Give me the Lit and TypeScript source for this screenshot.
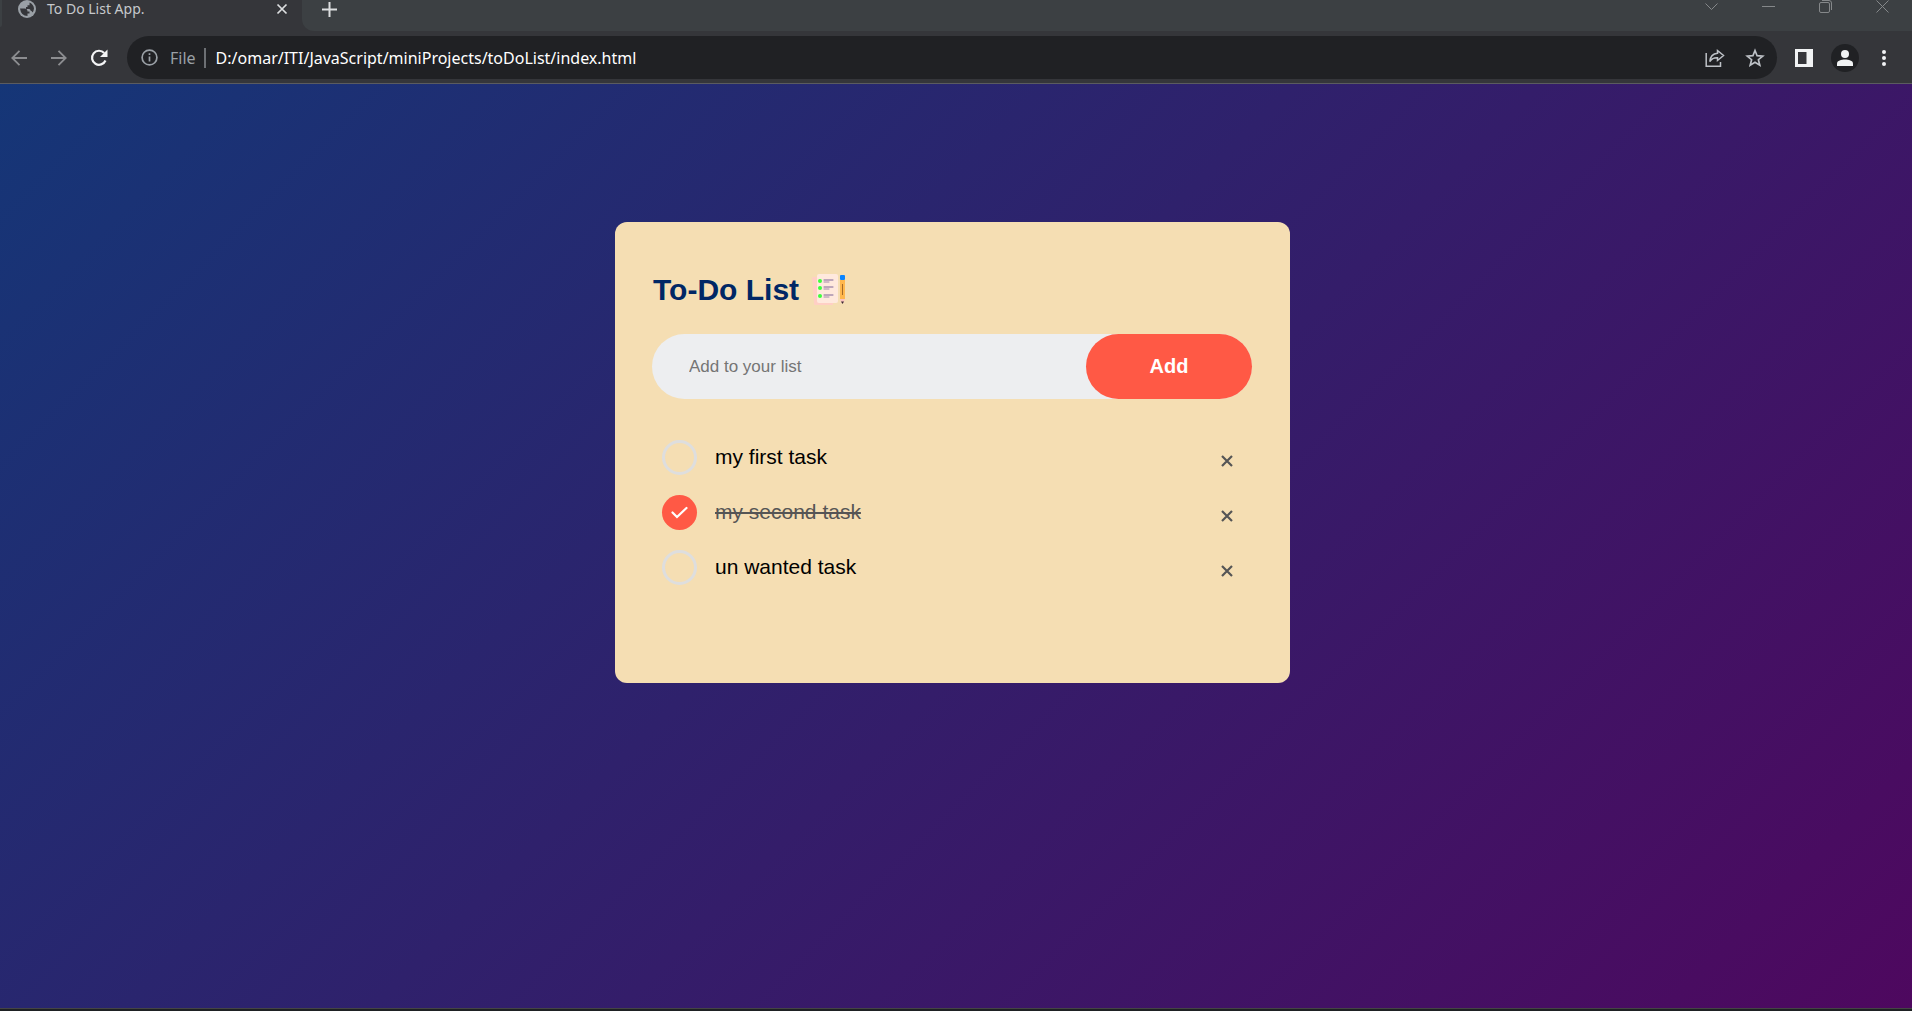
import { LitElement, html, css, svg } from "lit";
import { customElement, state } from "lit/decorators.js";
import { classMap } from "lit/directives/class-map.js";

interface Task {
  id: number;
  text: string;
  done: boolean;
}

@customElement("browser-chrome")
export class BrowserChrome extends LitElement {
  static styles = css`
    :host {
      display: block;
      font-family: "Noto Sans", "Open Sans", sans-serif;
      background: #35363a;
      border-bottom: 1px solid #5b5c60;
    }
    button {
      display: flex;
      align-items: center;
      justify-content: center;
      padding: 0;
      border: 0;
      background: none;
      color: inherit;
    }
    svg {
      display: block;
      overflow: visible;
    }
    .strip {
      display: flex;
      height: 31px;
    }
    .edge {
      width: 2px;
      height: 27px;
      background: #3c4043;
      border-bottom-right-radius: 2px;
    }
    .tab {
      display: flex;
      align-items: center;
      gap: 11px;
      box-sizing: border-box;
      width: 300px;
      height: 18px;
      padding: 0 12px 0 16px;
      color: #c6c9cc;
      font-size: 14px;
      line-height: 18px;
    }
    .tab-title {
      flex: 1;
    }
    .tab button,
    .new-tab {
      width: 16px;
      height: 18px;
      color: #dcdee0;
    }
    .rest {
      flex: 1;
      display: flex;
      justify-content: space-between;
      padding: 0 1px 0 19px;
      background: #3c4043;
      border-bottom-left-radius: 12px;
    }
    .window {
      display: flex;
      color: #85888a;
    }
    .window button {
      width: 57px;
      height: 12px;
    }
    .bar {
      display: flex;
      align-items: center;
      gap: 20px;
      padding: 5px 21px 4px 9px;
      color: #8c8d90;
    }
    .nav {
      display: flex;
      gap: 20px;
    }
    .nav button {
      width: 20px;
      height: 20px;
    }
    .nav .reload {
      color: #f4f5f6;
    }
    .address {
      flex: 1;
      display: flex;
      align-items: center;
      height: 43px;
      box-sizing: border-box;
      padding: 0 12px 0 14px;
      border-radius: 22px;
      background: #202124;
      color: #9aa0a6;
      font-size: 16px;
      margin-left: -2px;
    }
    .scheme {
      margin: 0 10px 0 12px;
      padding-right: 8px;
      border-right: 2px solid #6d7074;
      line-height: 20px;
    }
    .url {
      flex: 1;
      min-width: 0;
      margin: 0;
      padding: 0;
      border: 0;
      outline: 0;
      background: none;
      color: #fff;
      font-family: inherit;
      font-size: 16px;
      line-height: 24px;
    }
    .actions {
      display: flex;
      gap: 20px;
      color: #bdc1c6;
    }
    .extras {
      display: flex;
      align-items: center;
      gap: 18px;
      margin-left: -2px;
      color: #f1f3f4;
    }
    .avatar {
      width: 28px;
      height: 28px;
      border-radius: 50%;
      background: #202124;
    }
    .menu {
      width: 14px;
    }
  `;

  render() {
    return html`
      <div class="strip">
        <span class="edge"></span>
        <div class="tab">
          <svg width="18" height="18" viewBox="0 0 18 18">
            <circle cx="9" cy="9" r="9" fill="#9aa0a6" />
            <path
              d="M2 8.500 H6.500 Q9.500 8.500 9.500 11.500 H11.500 V13.500 H9.500 V16 Q3 16 2 8.500 Z M11.500 2.400 Q15.600 4.200 16 8.500 Q15.800 11 14.500 12.500 Q14 11 12.500 10.500 Q12.500 9 11 9 H8 V7 H9.500 V5.200 H11.500 Z"
              fill="#35363a"
            />
          </svg>
          <span class="tab-title">To Do List App.</span>
          <button aria-label="Close tab">
            <svg width="10" height="10" viewBox="0 0 10 10" stroke="currentColor" stroke-width="1.700">
              <path d="M0.500 0.500 L9.500 9.500 M9.500 0.500 L0.500 9.500" />
            </svg>
          </button>
        </div>
        <div class="rest">
          <button class="new-tab" aria-label="New tab">
            <svg width="15" height="15" viewBox="0 0 15 15" stroke="currentColor" stroke-width="2">
              <path d="M7.500 0 V15 M0 7.500 H15" />
            </svg>
          </button>
          <div class="window">
            <button aria-label="Search tabs">
              <svg width="13" height="7" viewBox="0 0 13 7" fill="none" stroke="currentColor">
                <path d="M0.500 0.500 L6.500 6.500 L12.500 0.500" />
              </svg>
            </button>
            <button aria-label="Minimize">
              <svg width="13" height="1" viewBox="0 0 13 1"><rect width="13" height="1" fill="currentColor" /></svg>
            </button>
            <button aria-label="Restore">
              <svg width="13" height="13" viewBox="0 0 13 13" fill="none" stroke="currentColor">
                <rect x="0.500" y="2.500" width="10" height="10" rx="1.500" />
                <path d="M3 0.500 H10 Q12.500 0.500 12.500 3 V10" />
              </svg>
            </button>
            <button aria-label="Close window">
              <svg width="13" height="13" viewBox="0 0 13 13" stroke="currentColor">
                <path d="M0.500 0.500 L12.500 12.500 M12.500 0.500 L0.500 12.500" />
              </svg>
            </button>
          </div>
        </div>
      </div>
      <div class="bar">
        <div class="nav">
          <button aria-label="Back">
            <svg width="16" height="16" viewBox="0 0 16 16" fill="none" stroke="currentColor" stroke-width="1.800">
              <path d="M16 8 H1.500 M8.500 0.800 L1.300 8 L8.500 15.200" />
            </svg>
          </button>
          <button aria-label="Forward">
            <svg width="16" height="16" viewBox="0 0 16 16" fill="none" stroke="currentColor" stroke-width="1.800">
              <path d="M0 8 H14.500 M7.500 0.800 L14.700 8 L7.500 15.200" />
            </svg>
          </button>
          <button class="reload" aria-label="Reload">
            <svg width="18" height="18" viewBox="0 0 18 18" fill="none">
              <path d="M15.500 11.500 A7 7 0 1 1 14.200 4" stroke="currentColor" stroke-width="2.200" />
              <path d="M17.500 0.500 V8 H10 Z" fill="currentColor" />
            </svg>
          </button>
        </div>
        <div class="address">
          <svg width="17" height="17" viewBox="0 0 17 17" fill="none" stroke="currentColor" stroke-width="1.700">
            <circle cx="8.500" cy="8.500" r="7.400" />
            <path d="M8.500 7.500 V12.500 M8.500 4.300 V6" />
          </svg>
          <span class="scheme">File</span>
          <input
            class="url"
            aria-label="Address"
            spellcheck="false"
            value="D:/omar/ITI/JavaScript/miniProjects/toDoList/index.html"
          />
          <div class="actions">
            <button aria-label="Share">
              <svg width="20" height="20" viewBox="0 0 20 20" fill="none" stroke="currentColor" stroke-width="1.500">
                <path d="M1.200 5 V18.200 H15.500 V14" />
                <path d="M12.500 2.500 L18.500 7.500 L12.500 12.500 V9.800 Q7.500 9.500 4.800 13.500 Q5.500 6 12.500 5.300 Z" />
              </svg>
            </button>
            <button aria-label="Bookmark">
              <svg width="20" height="20" viewBox="0 0 20 20" fill="none" stroke="currentColor" stroke-width="1.700">
                <path
                  d="M10 2.500 L12.100 7.700 L17.700 8.100 L13.400 11.700 L14.800 17.200 L10 14.200 L5.200 17.200 L6.600 11.700 L2.300 8.100 L7.900 7.700 Z"
                />
              </svg>
            </button>
          </div>
        </div>
        <div class="extras">
          <button aria-label="Side panel">
            <svg width="18" height="18" viewBox="0 0 18 18">
              <path fill-rule="evenodd" fill="currentColor" d="M0 0 H18 V18 H0 Z M3 3 V15 H11.500 V3 Z" />
            </svg>
          </button>
          <button class="avatar" aria-label="Profile">
            <svg width="16" height="16" viewBox="0 0 16 16" fill="currentColor">
              <circle cx="8" cy="4" r="4" />
              <path d="M0 16 V13.500 C0 10.500 4.500 9.500 8 9.500 S16 10.500 16 13.500 V16 Z" />
            </svg>
          </button>
          <button class="menu" aria-label="Menu">
            <svg width="4" height="16" viewBox="0 0 4 16" fill="currentColor">
              <circle cx="2" cy="2" r="2" />
              <circle cx="2" cy="8" r="2" />
              <circle cx="2" cy="14" r="2" />
            </svg>
          </button>
        </div>
      </div>
    `;
  }
}

@customElement("todo-card")
export class TodoCard extends LitElement {
  static styles = css`
    :host {
      display: block;
      box-sizing: border-box;
      padding: 49px 38px 88px 37px;
      border-radius: 12px;
      background: #f5deb3;
      font-family: "Liberation Sans", Arial, sans-serif;
    }
    .title {
      display: flex;
      align-items: center;
      gap: 12px;
      margin: 0 0 26px;
      padding-left: 1px;
      color: #002765;
      font-size: 30px;
      line-height: 37px;
    }
    .adder {
      display: flex;
      margin: 0 0 31px;
      border-radius: 33px;
      background: #edeef0;
    }
    .entry {
      flex: 1;
      min-width: 0;
      padding: 0 12px 0 37px;
      border: 0;
      outline: 0;
      background: none;
      font-family: inherit;
      font-size: 17px;
    }
    .entry::placeholder {
      color: #757575;
    }
    .add {
      width: 166px;
      height: 65px;
      border: 0;
      border-radius: 33px;
      background: #ff5945;
      color: #fff;
      font-family: inherit;
      font-size: 20px;
      font-weight: bold;
      cursor: pointer;
    }
    .list {
      margin: 0;
      padding: 0;
      list-style: none;
    }
    .item {
      display: flex;
      align-items: center;
      justify-content: space-between;
      height: 55px;
      padding: 0 10px;
      font-size: 21px;
      color: #000;
    }
    .label {
      display: flex;
      align-items: center;
      gap: 18px;
      cursor: pointer;
    }
    .text {
      padding-bottom: 2px;
    }
    .box {
      display: grid;
      place-items: center;
    }
    .check,
    .tick {
      grid-area: 1 / 1;
    }
    .check {
      width: 35px;
      height: 35px;
      margin: 0;
      appearance: none;
      box-sizing: border-box;
      border: 3px solid #dedede;
      border-radius: 50%;
    }
    .check:checked {
      border: 0;
      background: #ff5945;
    }
    .tick {
      pointer-events: none;
    }
    .done .text {
      color: #555;
      text-decoration: line-through;
    }
    .remove {
      display: flex;
      justify-content: center;
      width: 30px;
      padding: 6px 0 0;
      border: 0;
      background: none;
      color: #555;
      cursor: pointer;
    }
  `;

  @state() private tasks: Task[] = [
    { id: 1, text: "my first task", done: false },
    { id: 2, text: "my second task", done: true },
    { id: 3, text: "un wanted task", done: false },
  ];

  private nextId = 4;

  private add(event: Event) {
    event.preventDefault();
    const entry = this.renderRoot.querySelector<HTMLInputElement>(".entry")!;
    const text = entry.value.trim();
    if (!text) return;
    this.tasks = [...this.tasks, { id: this.nextId++, text, done: false }];
    entry.value = "";
  }

  private toggle(id: number) {
    this.tasks = this.tasks.map((t) => (t.id === id ? { ...t, done: !t.done } : t));
  }

  private remove(id: number) {
    this.tasks = this.tasks.filter((t) => t.id !== id);
  }

  private notepad() {
    const row = (y: number) => svg`
      <circle cx="9" cy=${y} r="2" fill="#3cff3c" />
      <path d="M13 ${y - 1} H22" stroke="#7d6597" stroke-width="1" stroke-linecap="round" />
      <path d="M13 ${y + 1} H18" stroke="#a28bab" stroke-width="1" stroke-linecap="round" />
    `;
    return html`
      <svg width="36" height="36" viewBox="0 0 36 36" aria-hidden="true">
        <path d="M1 6 Q1 5 2 5 H22 V32 Q22 33 21 33 H4 Q3 33 3 32 Z" fill="#ffcfc4" />
        <rect x="6" y="2" width="21" height="29" rx="2" fill="#ffe9dd" />
        ${row(9)} ${row(16)} ${row(24)}
        <rect x="29" y="3" width="5" height="5" rx="1" fill="#0a84ff" />
        <rect x="29" y="8" width="5" height="19" fill="#ffb74d" />
        <rect x="31" y="12" width="1" height="11" fill="#a56a28" />
        <path d="M29 27 H34 L32.500 31 H30.500 Z" fill="#fcc3c0" />
        <path d="M30 29.500 H33 L31.500 32 Z" fill="#3a2b33" />
      </svg>
    `;
  }

  render() {
    return html`
      <h2 class="title">To-Do List ${this.notepad()}</h2>
      <form class="adder" @submit=${this.add}>
        <input class="entry" type="text" aria-label="New task" placeholder="Add to your list" />
        <button class="add" type="submit">Add</button>
      </form>
      <ul class="list">
        ${this.tasks.map(
          (task) => html`
            <li class=${classMap({ item: true, done: task.done })}>
              <label class="label">
                <span class="box">
                  <input
                    class="check"
                    type="checkbox"
                    .checked=${task.done}
                    @change=${() => this.toggle(task.id)}
                  />
                  ${task.done
                    ? html`<svg class="tick" width="17" height="13" viewBox="0 0 17 13" fill="none">
                        <path d="M1.500 6.500 L6 11 L15.500 2" stroke="#fff" stroke-width="2.200" stroke-linecap="round" />
                      </svg>`
                    : ""}
                </span>
                <span class="text">${task.text}</span>
              </label>
              <button class="remove" aria-label="Remove task" @click=${() => this.remove(task.id)}>
                <svg width="12" height="12" viewBox="0 0 12 12" stroke="currentColor" stroke-width="2.200">
                  <path d="M1 1 L11 11 M11 1 L1 11" />
                </svg>
              </button>
            </li>
          `
        )}
      </ul>
    `;
  }
}

@customElement("app-root")
export class AppRoot extends LitElement {
  static styles = css`
    :host {
      display: flex;
      flex-direction: column;
      min-height: 100vh;
    }
    .page {
      flex: 1;
      padding: 138px 7px 24px 0;
      background: linear-gradient(135deg, #153677, #4e085f);
    }
    .card {
      max-width: 675px;
      margin: 0 auto;
    }
    .taskbar {
      height: 2px;
      border-top: 1px solid #444444;
      background: #1e2123;
    }
  `;

  render() {
    return html`
      <browser-chrome></browser-chrome>
      <main class="page"><todo-card class="card"></todo-card></main>
      <div class="taskbar"></div>
    `;
  }
}
